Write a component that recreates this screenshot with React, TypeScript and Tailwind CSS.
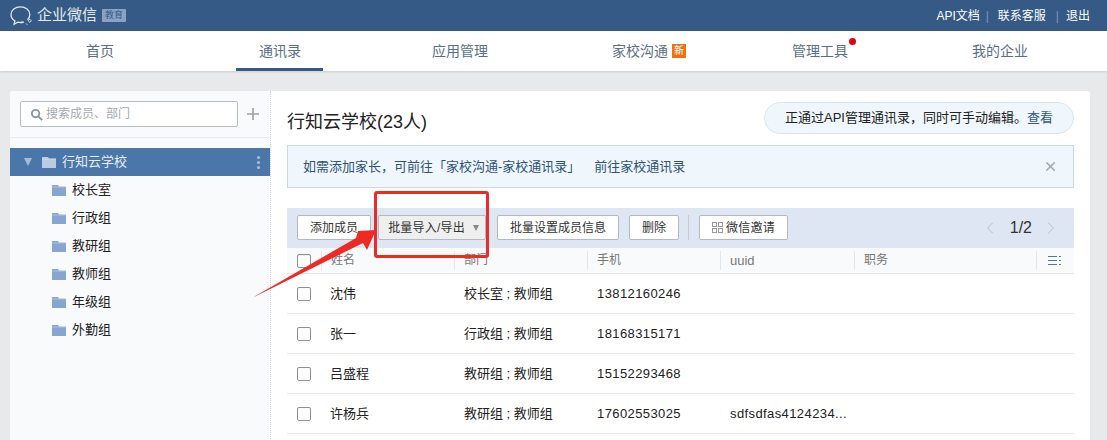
import { ChevronLeft, ChevronRight, X } from 'lucide-react';

const navItems = ['首页', '通讯录', '应用管理', '家校沟通', '管理工具', '我的企业'];
const groups = ['校长室', '行政组', '教研组', '教师组', '年级组', '外勤组'];
const members = [
  { name: '沈伟', dept: '校长室 ; 教师组', phone: '13812160246', uuid: '' },
  { name: '张一', dept: '行政组 ; 教师组', phone: '18168315171', uuid: '' },
  { name: '吕盛程', dept: '教研组 ; 教师组', phone: '15152293468', uuid: '' },
  { name: '许杨兵', dept: '教研组 ; 教师组', phone: '17602553025', uuid: 'sdfsdfas4124234...' },
];

const FolderIcon = ({ color }: { color: string }) => (
  <svg width="14" height="11" viewBox="0 0 14 11" fill={color} className="shrink-0">
    <path d="M0 0h6l1 1.500h7V11H0z" />
    <path d="M0 2h14" stroke="#fff" strokeOpacity="0.5" strokeWidth="0.6" />
  </svg>
);

const LogoIcon = () => (
  <svg width="24" height="20" viewBox="0 0 24 20" fill="none" stroke="#dfe7f0" strokeWidth="1.300">
    <path d="M17.500 13.800c1.500-1.500 2.300-3.300 2.300-5.300C19.800 4 15.600.8 10.400.8S1 4 1 8.500c0 2.700 1.500 5 3.900 6.400l-.8 3.300 3.700-2c.8.200 1.700.3 2.600.3 1.200 0 2.300-.2 3.400-.5" />
    <path d="M19.800 13.200l1.600 1.600-1.600 1.600-1.600-1.600z" strokeWidth="1" />
    <path d="M16 17.500l1.200 1.200" strokeWidth="1" />
  </svg>
);

const Checkbox = () => <span className="block w-[14px] h-[14px] rounded-[2px] border border-[#8b9097] bg-white" />;

const Btn = ({ children, className = 'bg-white' }: { children: React.ReactNode; className?: string }) => (
  <button className={`h-[25px] flex items-center justify-center rounded-[2px] border border-[#b4b9c0] text-[12px] text-[#333] ${className}`}>
    {children}
  </button>
);

export default function App() {
  return (
    <div className="relative h-[440px] overflow-hidden bg-[#e8e9ea] font-['Liberation_Sans','Noto_Sans_CJK_SC',sans-serif]">
      {/* Top bar */}
      <div className="h-[31px] bg-[#355a86] flex items-center justify-between pl-[10px] pr-[17px]">
        <div className="flex items-center">
          <LogoIcon />
          <span className="ml-[3px] text-[15px] text-[#e4eaf1]">企业微信</span>
          <span className="ml-[5px] w-[24px] h-[13px] rounded-[1px] bg-[#8aa3c4] text-[#355a86] text-[9px] leading-[13px] text-center">教育</span>
        </div>
        <div className="flex items-center text-[12px] text-white">
          <span>API文档</span>
          <span className="mx-[6px] text-[#7d97b5]">|</span>
          <span className="ml-[3px]">联系客服</span>
          <span className="mr-[7px] ml-[10px] text-[#7d97b5]">|</span>
          <span>退出</span>
        </div>
      </div>

      {/* Nav */}
      <div className="h-[40px] bg-white shadow-[0_1px_2px_rgba(0,0,0,0.12)] flex px-[10px]">
        {navItems.map((item) => (
          <div key={item} className="relative w-[180px] flex items-center justify-center text-[14px] text-[#5a6f87]">
            {item === '通讯录' && (
              <span className="absolute bottom-0 left-[46px] w-[87px] h-[3px] bg-[#355a86]" />
            )}
            <span className="relative">
              {item}
              {item === '家校沟通' && (
                <span className="absolute left-[60px] top-[3px] w-[14px] h-[14px] bg-[#ee7212] text-white text-[10px] leading-[14px] text-center">新</span>
              )}
              {item === '管理工具' && (
                <span className="absolute right-[-8px] top-[-3px] w-[7px] h-[7px] rounded-full bg-[#e60012]" />
              )}
            </span>
          </div>
        ))}
      </div>

      {/* Card */}
      <div className="ml-[10px] mt-[20px] w-[1080px] h-[360px] flex rounded-t-[3px] bg-white overflow-hidden">
        {/* Sidebar */}
        <div className="w-[261px] shrink-0 bg-[#f9fafc] border-r border-dotted border-[#cfd5dc]">
          <div className="h-[47px] border-b border-[#e8ebf0] flex items-start pt-[10px] pl-[10px]">
            <div className="w-[218px] h-[26px] rounded-[2px] border border-[#b8bdc4] bg-white flex items-center pl-[9px]">
              <svg width="13" height="13" viewBox="0 0 14 14" fill="none" stroke="#8f959c" strokeWidth="2">
                <circle cx="6" cy="6" r="4" />
                <path d="M9 9l4 4" />
              </svg>
              <span className="ml-[3px] text-[12px] text-[#a4a9af]">搜索成员、部门</span>
            </div>
            <svg width="12" height="12" viewBox="0 0 12 12" className="ml-[9px] mt-[7px]" stroke="#9aa0a7" strokeWidth="1.600">
              <path d="M6 0v12M0 6h12" />
            </svg>
          </div>
          <div className="mt-[10px] h-[28px] bg-[#4a76aa] flex items-center text-white text-[13px] pl-[14px] pr-[10px]">
            <span className="w-0 h-0 border-x-[4px] border-x-transparent border-t-[8px] border-t-[#a5bcd8]" />
            <span className="ml-[10px]"><FolderIcon color="#b9cbe1" /></span>
            <span className="ml-[6px] text-[#e6edf5]">行知云学校</span>
            <span className="ml-auto flex flex-col gap-[2px]">
              <i className="block w-[3px] h-[3px] rounded-full bg-[#a9c0dc]" />
              <i className="block w-[3px] h-[3px] rounded-full bg-[#a9c0dc]" />
              <i className="block w-[3px] h-[3px] rounded-full bg-[#a9c0dc]" />
            </span>
          </div>
          {groups.map((g) => (
            <div key={g} className="h-[28px] flex items-center pl-[42px] text-[13px] text-[#222]">
              <FolderIcon color="#86a6d1" />
              <span className="ml-[6px]">{g}</span>
            </div>
          ))}
        </div>

        {/* Main */}
        <div className="flex-1 min-w-0 pl-[16px] pr-[16px]">
          <div className="h-[54px] flex items-start justify-between pt-[11px]">
            <span className="text-[18px] leading-[40px] text-[#222]">行知云学校(23人)</span>
            <div className="w-[310px] h-[32px] rounded-full border border-[#dbe5f0] bg-[#eff6fc] flex items-center pl-[20px] text-[13px] text-[#222]">
              正通过API管理通讯录，同时可手动编辑。<span className="text-[#355a86]">查看</span>
            </div>
          </div>
          <div className="h-[43px] border border-[#c9d9e8] bg-[#eff6fc] flex items-center pl-[15px] pr-[15px] text-[13px] text-[#2e5378]">
            <span>如需添加家长，可前往「家校沟通-家校通讯录」</span>
            <span className="ml-[14px]">前往家校通讯录</span>
            <X size={15} strokeWidth={2.500} className="ml-auto text-[#a3a8ae]" />
          </div>

          {/* Toolbar */}
          <div className="mt-[20px] h-[39px] bg-[#dde6f2] flex items-center pl-[10px] pr-[13px]">
            <Btn className="bg-white w-[74px]">添加成员</Btn>
            <Btn className="ml-[7px] w-[108px] bg-[#efefef] gap-[8px] pl-[3px] tracking-[0.2px]">
              批量导入/导出
              <span className="w-0 h-0 border-x-[3.500px] border-x-transparent border-t-[6px] border-t-[#888]" />
            </Btn>
            <Btn className="bg-white ml-[11px] w-[122px]">批量设置成员信息</Btn>
            <Btn className="bg-white ml-[10px] w-[50px]">删除</Btn>
            <span className="ml-[9px] w-px h-[25px] bg-[#c3ccd6]" />
            <Btn className="bg-white ml-[10px] w-[89px] gap-[3px] tracking-[0.3px]">
              <svg width="11" height="11" viewBox="0 0 11 11" fill="none" stroke="#999">
                <rect x="0.500" y="0.500" width="4" height="4" />
                <rect x="6.500" y="0.500" width="4" height="4" />
                <rect x="0.500" y="6.500" width="4" height="4" />
                <rect x="6.500" y="6.500" width="4" height="4" />
              </svg>
              微信邀请
            </Btn>
            <div className="ml-auto flex items-center text-[16px] text-[#333]">
              <ChevronLeft size={20} strokeWidth={1.200} className="text-[#b5bcc4]" />
              <span className="ml-[10px] mr-[9px]">1/2</span>
              <ChevronRight size={20} strokeWidth={1.200} className="text-[#b5bcc4]" />
            </div>
          </div>

          {/* Table */}
          <div className="h-[27px] bg-[#f9fafc] border-y border-[#e3e6ea] flex items-center text-[12px] text-[#777]">
            <div className="w-[34px] pl-[10px]"><Checkbox /></div>
            <div className="w-[133px] h-[19px] border-l border-[#e3e6ea] pl-[9px] leading-[19px]">姓名</div>
            <div className="w-[133px] h-[19px] border-l border-[#e3e6ea] pl-[9px] leading-[19px]">部门</div>
            <div className="w-[133px] h-[19px] border-l border-[#e3e6ea] pl-[9px] leading-[19px]">手机</div>
            <div className="w-[134px] h-[19px] border-l border-[#e3e6ea] pl-[9px] leading-[19px] text-[13px]">uuid</div>
            <div className="w-[182px] h-[19px] border-l border-[#e3e6ea] pl-[9px] leading-[19px]">职务</div>
            <div className="flex-1 h-[19px] border-l border-[#e3e6ea] pl-[11px] pt-[4px]">
              <svg width="13" height="11" viewBox="0 0 13 11" stroke="#4a76aa" strokeWidth="1">
                <path d="M0 1.500h9M0 5.500h9M0 9.500h9M11 1.500h2M11 5.500h2M11 9.500h2" />
              </svg>
            </div>
          </div>
          {members.map((m) => (
            <div key={m.name} className="h-[40px] border-b border-[#e8ebef] flex items-center text-[13px] text-[#222]">
              <div className="w-[34px] pl-[10px]"><Checkbox /></div>
              <div className="w-[133px] pl-[9px]">{m.name}</div>
              <div className="w-[133px] pl-[10px]">{m.dept}</div>
              <div className="w-[133px] pl-[10px] tracking-[0.4px]">{m.phone}</div>
              <div className="pl-[10px] tracking-[0.4px]">{m.uuid}</div>
            </div>
          ))}
        </div>
      </div>

      {/* Annotations drawn over the screenshot */}
      <div className="absolute left-[374px] top-[191px] w-[115px] h-[67px] rounded-[3px] border-[3px] border-[#ee2a24]" />
      <svg className="absolute left-0 top-0" width="1107" height="440" viewBox="0 0 1107 440">
        <path d="M252 298 L356 238 L358 231 L376 230 L367 250 L363 243 Z" fill="#ee2a24" />
      </svg>
    </div>
  );
}
